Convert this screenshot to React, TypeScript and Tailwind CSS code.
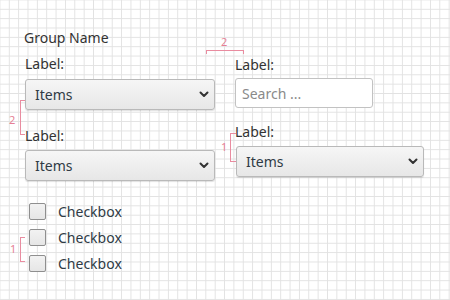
import React from 'react';

// Small chevron used by the dropdowns
const Chevron = () => (
  <svg width="10" height="7" viewBox="0 0 10 7" className="shrink-0">
    <path d="M1.5 1.5 L5 5 L8.5 1.5" fill="none" stroke="#333" strokeWidth="2" strokeLinecap="round" strokeLinejoin="round" />
  </svg>
);

const Select = ({ className = '' }: { className?: string }) => (
  <div
    className={`h-[31px] flex items-center justify-between pl-[9px] pr-[5px] rounded-[3px] border border-[#b9b9b9] bg-[linear-gradient(to_bottom,#f6f6f6,#e7e7e7)] shadow-[0_1px_1px_rgba(0,0,0,0.12)] text-[14px] text-[#2f3b45] ${className}`}
  >
    <span>Items</span>
    <Chevron />
  </div>
);

const Label = ({ children }: { children: React.ReactNode }) => (
  <div className="h-[19px] leading-[19px] text-[14px] text-[#333]">{children}</div>
);

const Checkbox = ({ label }: { label: string }) => (
  <div className="h-[26px] flex items-center pl-[4px]">
    <div className="w-[17px] h-[17px] rounded-[2px] border border-[#8f8f8f] bg-[linear-gradient(to_bottom,#f2f2f2,#e6e6e6)]" />
    <span className="ml-[12px] text-[14px] text-[#2f3b45] leading-[19px]">{label}</span>
  </div>
);

// Red spacing annotations drawn over the layout
const Annotations = () => (
  <div className="absolute inset-0 pointer-events-none text-[#e67f95] text-[11px] leading-none">
    {/* top horizontal "2" */}
    <div className="absolute left-[206px] top-[50px] w-[38px] h-[4px] border-t border-l border-r border-[#e98ca0]" />
    <div className="absolute left-[221px] top-[36px]">2</div>

    {/* left "2" between select and label */}
    <div className="absolute left-[20px] top-[100px] w-[5px] h-[35px] border-t border-l border-b border-[#e98ca0]" />
    <div className="absolute left-[9px] top-[114px]">2</div>

    {/* right "1" */}
    <div className="absolute left-[230px] top-[133px] w-[6px] h-[29px] border-t border-l border-b border-[#e98ca0]" />
    <div className="absolute left-[221px] top-[141px]">1</div>

    {/* checkbox "1" */}
    <div className="absolute left-[20px] top-[237px] w-[5px] h-[25px] border-t border-l border-b border-[#e98ca0]" />
    <div className="absolute left-[10px] top-[243px]">1</div>
  </div>
);

export default function App() {
  return (
    <div
      className="relative w-[450px] h-[300px] overflow-hidden bg-white bg-[linear-gradient(to_right,#e2e2e2_1px,transparent_1px),linear-gradient(to_bottom,#e2e2e2_1px,transparent_1px)] bg-[size:9.36px_9.36px] bg-[position:8.8px_8.8px]"
      style={{ fontFamily: '"Noto Sans", "Open Sans", sans-serif' }}
    >
      <div className="flex pl-[25px] pt-[28px]">
        {/* left column */}
        <div className="w-[190px] flex flex-col">
          <div className="h-[19px] leading-[19px] text-[14px] text-[#333] -ml-[1px]">Group Name</div>
          <div className="mt-[7px]">
            <Label>Label:</Label>
          </div>
          <Select className="mt-[6px]" />
          <div className="mt-[16px]">
            <Label>Label:</Label>
          </div>
          <Select className="mt-[5px]" />
          <div className="mt-[17px] flex flex-col">
            <Checkbox label="Checkbox" />
            <Checkbox label="Checkbox" />
            <Checkbox label="Checkbox" />
          </div>
        </div>

        {/* right column */}
        <div className="ml-[20px] w-[189px] flex flex-col pt-[27px]">
          <Label>Label:</Label>
          <div className="mt-[4px] w-[138px] h-[30px] flex items-center pl-[6px] rounded-[3px] border border-[#c2c2c2] bg-white text-[14px] text-[#8a8a8a]">
            Search ...
          </div>
          <div className="mt-[14px]">
            <Label>Label:</Label>
          </div>
          <Select className="mt-[5px] ml-[1px]" />
        </div>
      </div>
      <Annotations />
    </div>
  );
}
